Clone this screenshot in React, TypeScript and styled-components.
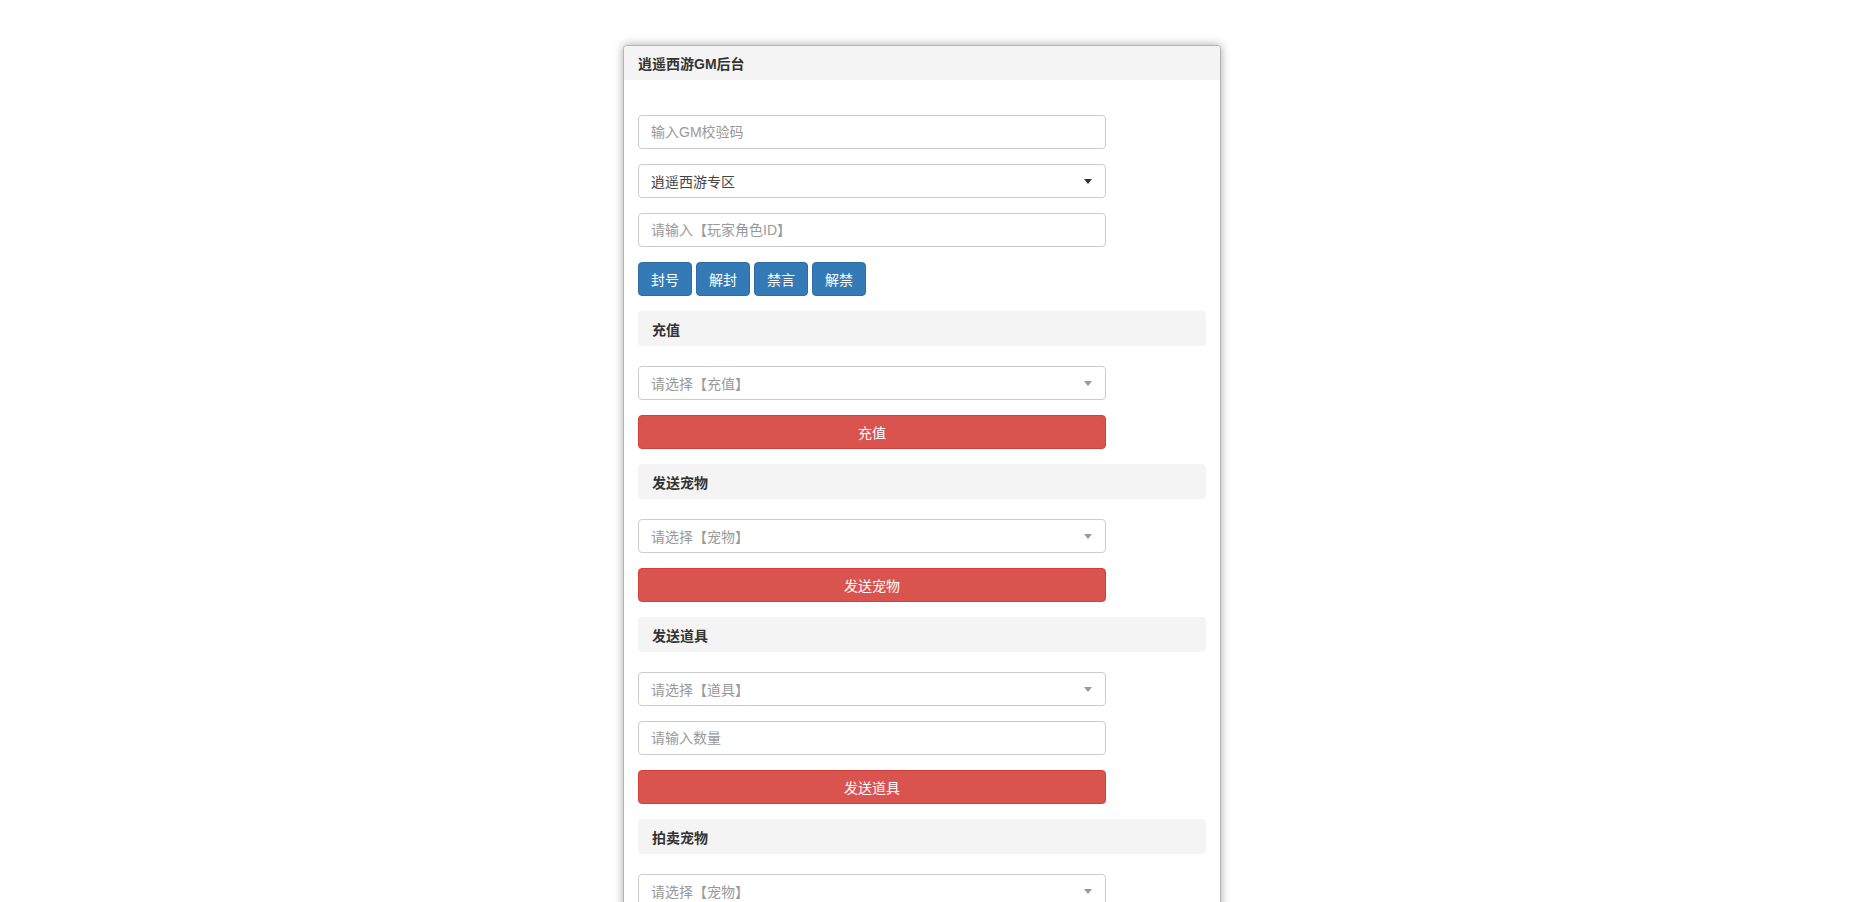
import React from 'react';
import styled, { createGlobalStyle } from 'styled-components';

const GlobalStyle = createGlobalStyle`
  html, body {
    margin: 0;
    padding: 0;
    background: #fff;
  }
  body {
    font-family: "Liberation Sans", Arial, "Noto Sans CJK SC", sans-serif;
    font-size: 14px;
    color: #333;
  }
  * {
    box-sizing: border-box;
  }
  ::-webkit-scrollbar {
    width: 5px;
  }
  ::-webkit-scrollbar-track {
    background: #f1f1f1;
  }
  ::-webkit-scrollbar-thumb {
    background: #c1c1c1;
    border-left: 1px solid #f1f1f1;
  }
  input::placeholder {
    color: #999;
  }
`;

const Page = styled.div`
  padding: 45px 10px 130px 0;
`;

const Panel = styled.div`
  width: 598px;
  margin: 0 auto;
  background: #fff;
  border: 1px solid #b5b5b5;
  border-radius: 4px;
  box-shadow: 0 0 10px rgba(0, 0, 0, 0.35);
`;

const PanelHeading = styled.div`
  height: 34px;
  padding: 0 14px;
  display: flex;
  align-items: center;
  background: #f4f4f4;
  border-radius: 3px 3px 0 0;
  font-weight: bold;
  font-size: 14px;
  color: #333;
`;

const PanelBody = styled.div`
  padding: 35px 14px 15px;
`;

const TextInput = styled.input`
  display: block;
  width: 468px;
  height: 34px;
  margin: 0 0 15px;
  padding: 6px 12px;
  border: 1px solid #ccc;
  border-radius: 4px;
  font-family: inherit;
  font-size: 14px;
  color: #555;
  outline: none;
`;

const Select = styled.div<{ $empty?: boolean }>`
  display: flex;
  align-items: center;
  justify-content: space-between;
  width: 468px;
  height: 34px;
  margin: 0 0 15px;
  padding: 0 13px 0 12px;
  border: 1px solid #ccc;
  border-radius: 4px;
  font-size: 14px;
  color: ${p => (p.$empty ? '#999' : '#444')};
  cursor: pointer;
`;

const Caret = styled.span<{ $empty?: boolean }>`
  width: 0;
  height: 0;
  border-style: solid;
  border-width: 5px 4px 0 4px;
  border-color: ${p => (p.$empty ? '#999' : '#333')} transparent transparent transparent;
`;

const ButtonRow = styled.div`
  display: flex;
  gap: 4px;
  margin-bottom: 15px;
`;

const PrimaryBtn = styled.button`
  height: 34px;
  padding: 6px 12px;
  background: #337ab7;
  border: 1px solid #2e6da4;
  border-radius: 4px;
  color: #fff;
  font-family: inherit;
  font-size: 14px;
  cursor: pointer;
`;

const DangerBtn = styled.button`
  display: block;
  width: 468px;
  height: 34px;
  margin: 0 0 15px;
  background: #d9534f;
  border: 1px solid #d43f3a;
  border-radius: 4px;
  color: #fff;
  font-family: inherit;
  font-size: 14px;
  cursor: pointer;
`;

const SectionTitle = styled.div`
  height: 35px;
  margin-bottom: 20px;
  padding: 0 14px;
  display: flex;
  align-items: center;
  background: #f4f4f4;
  border-radius: 4px;
  font-weight: bold;
  font-size: 14px;
  color: #333;
`;

const Dropdown = ({ text, empty }: { text: string; empty?: boolean }) => (
  <Select $empty={empty}>
    <span>{text}</span>
    <Caret $empty={empty} />
  </Select>
);

const App = () => {
  return (
    <React.Fragment>
      <GlobalStyle />
      <Page>
        <Panel>
          <PanelHeading>逍遥西游GM后台</PanelHeading>
          <PanelBody>
            <TextInput placeholder="输入GM校验码" />
            <Dropdown text="逍遥西游专区" />
            <TextInput placeholder="请输入【玩家角色ID】" />
            <ButtonRow>
              <PrimaryBtn>封号</PrimaryBtn>
              <PrimaryBtn>解封</PrimaryBtn>
              <PrimaryBtn>禁言</PrimaryBtn>
              <PrimaryBtn>解禁</PrimaryBtn>
            </ButtonRow>

            <SectionTitle>充值</SectionTitle>
            <Dropdown text="请选择【充值】" empty />
            <DangerBtn>充值</DangerBtn>

            <SectionTitle>发送宠物</SectionTitle>
            <Dropdown text="请选择【宠物】" empty />
            <DangerBtn>发送宠物</DangerBtn>

            <SectionTitle>发送道具</SectionTitle>
            <Dropdown text="请选择【道具】" empty />
            <TextInput placeholder="请输入数量" />
            <DangerBtn>发送道具</DangerBtn>

            <SectionTitle>拍卖宠物</SectionTitle>
            <Dropdown text="请选择【宠物】" empty />
            <TextInput placeholder="请输入价格" />
            <DangerBtn>拍卖宠物</DangerBtn>
          </PanelBody>
        </Panel>
      </Page>
    </React.Fragment>
  );
};

export default App;
